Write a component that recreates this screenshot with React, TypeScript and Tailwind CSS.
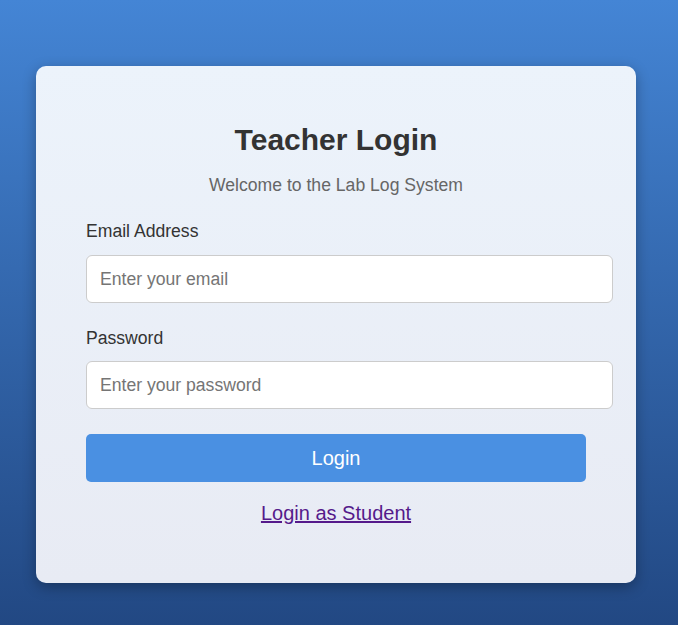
import React from "react";

export default function App() {
  return (
    <div
      className="w-full min-h-[625px] bg-gradient-to-b from-[#4485d5] to-[#224883] pl-[36px] pt-[66px] pb-[43px]"
      style={{ fontFamily: '"Liberation Sans", Arial, sans-serif' }}
    >
      <div className="w-[600px] rounded-[10px] bg-gradient-to-b from-[#ecf3fb] to-[#e8ebf4] px-[50px] pt-[57px] pb-[57px] shadow-[0_4px_14px_rgba(0,0,0,0.3)]">
        <h2 className="text-center text-[30px] leading-[34px] font-bold text-[#333333]">
          Teacher Login
        </h2>
        <p className="mt-[18px] text-center text-[17.6px] leading-[20px] text-[#666666]">
          Welcome to the Lab Log System
        </p>
        <label className="mt-[26px] block text-[17.6px] leading-[20px] text-[#333333]">
          Email Address
        </label>
        <input
          type="email"
          placeholder="Enter your email"
          className="mt-[14px] block h-[48px] w-[527px] rounded-[6px] border border-[#cccccc] bg-white px-[13px] text-[17.6px] text-[#333] placeholder:text-[#757575] outline-none"
        />
        <label className="mt-[25px] block text-[17.6px] leading-[20px] text-[#333333]">
          Password
        </label>
        <input
          type="password"
          placeholder="Enter your password"
          className="mt-[13px] block h-[48px] w-[527px] rounded-[6px] border border-[#cccccc] bg-white px-[13px] text-[17.6px] text-[#333] placeholder:text-[#757575] outline-none"
        />
        <button className="mt-[25px] block h-[48px] w-full rounded-[5px] bg-[#4a90e2] text-[20px] text-white">
          Login
        </button>
        <div className="mt-[20px] text-center leading-[22px]">
          <a href="#" className="text-[20px] text-[#551a8b] underline">
            Login as Student
          </a>
        </div>
      </div>
    </div>
  );
}
